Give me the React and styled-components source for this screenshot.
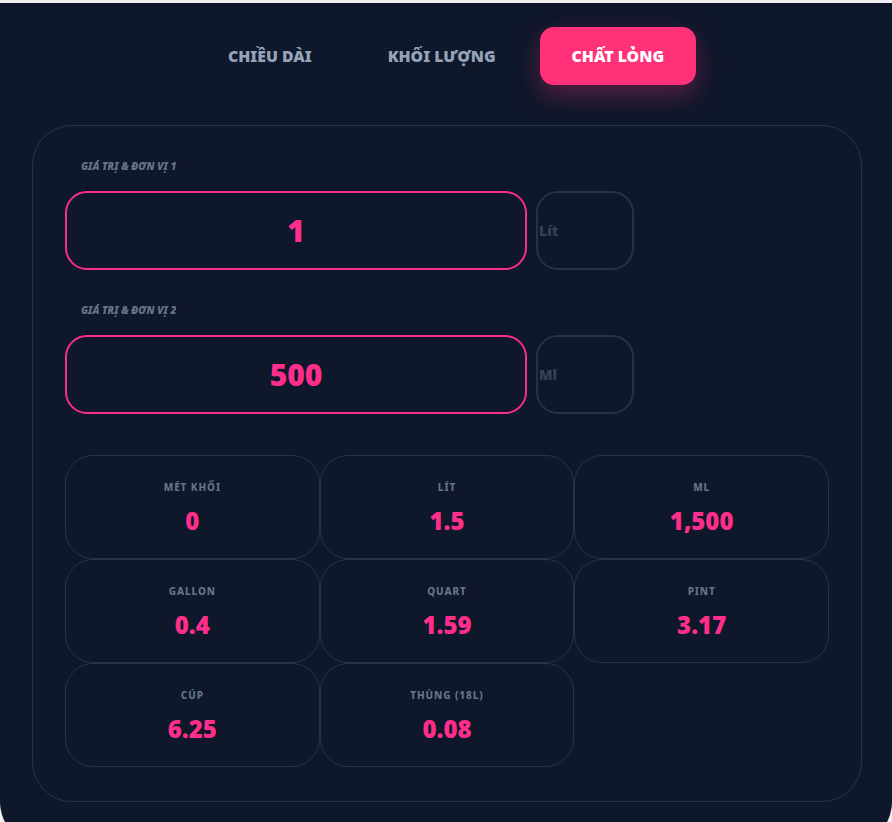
import styled, { createGlobalStyle } from 'styled-components';

const GlobalStyle = createGlobalStyle`
  html, body {
    margin: 0;
    padding: 0;
    background: #f1eff0;
  }
  body {
    padding-top: 3px;
    font-family: "Noto Sans", "Open Sans", sans-serif;
  }
`

const Shell = styled.div`
  background: #0f172a;
  padding: 24px 30px 47px 32px;
  border-radius: 0 0 48px 48px;
`

const Tabs = styled.div`
  display: flex;
  justify-content: center;
  gap: 12px;
  margin-bottom: 40px;
  padding-right: 2px;
`

const Tab = styled.button`
  border: none;
  font-family: inherit;
  font-size: 15.8px;
  font-weight: 900;
  text-transform: uppercase;
  height: 58px;
  padding: 0 32px;
  border-radius: 14px;
  cursor: pointer;
  background: ${p => (p.$active ? '#fe3179' : 'transparent')};
  color: ${p => (p.$active ? '#ffffff' : '#94a3b8')};
  box-shadow: ${p => (p.$active ? '0 10px 24px rgba(254, 49, 121, 0.3)' : 'none')};
`

const Card = styled.div`
  border: 1px solid #263449;
  border-radius: 40px;
  padding: 33px 32px 34px 32px;
`

const Field = styled.div`
  margin-bottom: 33px;
`

const FieldLabel = styled.div`
  font-size: 10.2px;
  line-height: 14px;
  font-weight: 900;
  font-style: italic;
  color: #64748b;
  text-transform: uppercase;
  padding-left: 16px;
  margin-bottom: 18px;
`

const FieldRow = styled.div`
  display: flex;
  gap: 9px;
`

const ValueBox = styled.div`
  width: 462px;
  height: 79px;
  box-sizing: border-box;
  border: 2px solid #f72d8c;
  border-radius: 22px;
  display: flex;
  align-items: center;
  justify-content: center;
  color: #ff2e8a;
  font-size: 30px;
  font-weight: 900;
`

const UnitBox = styled.div`
  width: 98px;
  height: 79px;
  box-sizing: border-box;
  border: 2px solid #253247;
  border-radius: 22px;
  display: flex;
  align-items: center;
  color: #334155;
  font-size: 14px;
  font-weight: 900;
  padding-left: 1px;
`

const Results = styled.div`
  display: grid;
  grid-template-columns: repeat(3, 1fr);
  grid-auto-rows: 104px;
  margin-top: 41px;
`

const ResultCard = styled.div`
  border: 1px solid #263449;
  border-radius: 28px;
  display: flex;
  flex-direction: column;
  align-items: center;
  justify-content: center;
  gap: 12px;
  padding-top: 2px;
`

const ResultLabel = styled.div`
  font-size: 10px;
  line-height: 13px;
  font-weight: 800;
  letter-spacing: 0.9px;
  color: #64748b;
  text-transform: uppercase;
`

const ResultValue = styled.div`
  font-size: 24px;
  line-height: 30px;
  font-weight: 900;
  color: #ff2e8a;
`

const tabs = ['Chiều dài', 'Khối lượng', 'Chất lỏng']

const fields = [
  { label: 'Giá trị & đơn vị 1', value: '1', unit: 'Lít' },
  { label: 'Giá trị & đơn vị 2', value: '500', unit: 'Ml' },
]

const results = [
  { label: 'Mét khối', value: '0' },
  { label: 'Lít', value: '1.5' },
  { label: 'Ml', value: '1,500' },
  { label: 'Gallon', value: '0.4' },
  { label: 'Quart', value: '1.59' },
  { label: 'Pint', value: '3.17' },
  { label: 'Cúp', value: '6.25' },
  { label: 'Thùng (18L)', value: '0.08' },
]

function App() {
  return (
    <>
      <GlobalStyle />
      <Shell>
        <Tabs>
          {tabs.map((t, i) => (
            <Tab key={t} $active={i === 2}>{t}</Tab>
          ))}
        </Tabs>
        <Card>
          {fields.map(f => (
            <Field key={f.label}>
              <FieldLabel>{f.label}</FieldLabel>
              <FieldRow>
                <ValueBox>{f.value}</ValueBox>
                <UnitBox>{f.unit}</UnitBox>
              </FieldRow>
            </Field>
          ))}
          <Results>
            {results.map(r => (
              <ResultCard key={r.label}>
                <ResultLabel>{r.label}</ResultLabel>
                <ResultValue>{r.value}</ResultValue>
              </ResultCard>
            ))}
          </Results>
        </Card>
      </Shell>
    </>
  );
}

export default App;
